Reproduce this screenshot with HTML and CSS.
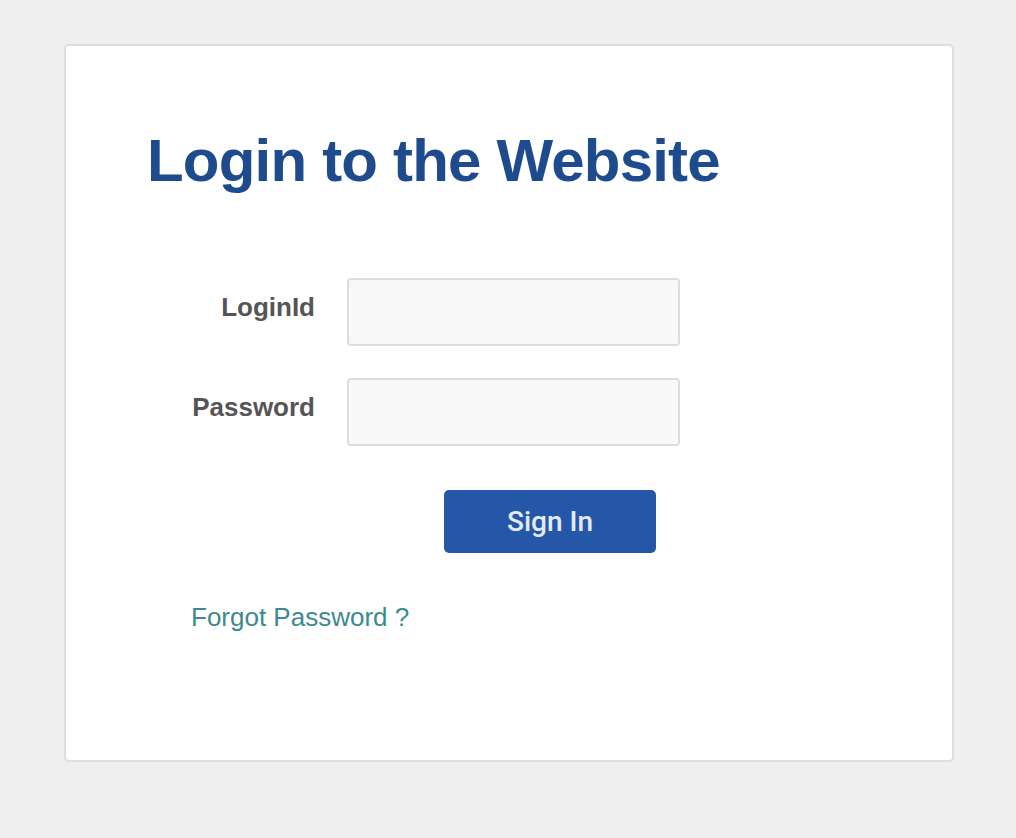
FILE: index.html
```html
<!DOCTYPE html>
<html lang="en">
<head>
<meta charset="utf-8">
<title>Login to the Website</title>
<link rel="stylesheet" href="styles.css">
</head>
<body>
  <div class="card">
    <h1 class="title">Login to the Website</h1>
    <form class="login-form">
      <label class="field-label" for="loginid">LoginId</label>
      <input class="field-input" id="loginid" type="text">
      <label class="field-label" for="password">Password</label>
      <input class="field-input" id="password" type="password">
      <div class="actions">
        <button type="button" class="btn-signin">Sign In</button>
      </div>
    </form>
    <a class="forgot" href="#">Forgot Password ?</a>
  </div>
</body>
</html>
```
FILE: styles.css
```css
html, body {
  margin: 0;
  padding: 0;
}
body {
  background: #efefef;
  font-family: "Liberation Sans", Arial, Helvetica, sans-serif;
  padding: 44px 0 0 64px;
  min-height: 838px;
  box-sizing: border-box;
}
.card {
  box-sizing: border-box;
  width: 890px;
  height: 718px;
  background: #ffffff;
  border: 2px solid #dedede;
  border-radius: 5px;
  padding: 85px 0 0 78px;
}
.title {
  margin: 0 0 0 3px;
  font-size: 60px;
  line-height: 60px;
  font-weight: bold;
  letter-spacing: -0.8px;
  color: #1e4b8d;
}
.login-form {
  display: grid;
  grid-template-columns: 171px 333px;
  column-gap: 32px;
  row-gap: 32px;
  margin-top: 87px;
}
.field-label {
  justify-self: end;
  align-self: start;
  padding-top: 14px;
  font-size: 26px;
  line-height: 30px;
  font-weight: bold;
  color: #555555;
}
.field-input {
  box-sizing: border-box;
  width: 333px;
  height: 68px;
  margin: 0;
  background: #f9f9f9;
  border: 2px solid #dddddd;
  border-radius: 4px;
  font-size: 22px;
  padding: 0 12px;
  outline: none;
}
.actions {
  grid-column: 2;
  margin-top: 12px;
  padding-left: 97px;
}
.btn-signin {
  display: block;
  width: 212px;
  height: 63px;
  border: none;
  border-radius: 5px;
  background: #2557a8;
  color: #e4eaf4;
  font-family: Roboto, "Liberation Sans", sans-serif;
  font-size: 28px;
  font-weight: 500;
  padding: 0;
  cursor: pointer;
}
.forgot {
  display: inline-block;
  margin-top: 49px;
  margin-left: 47px;
  font-size: 26px;
  line-height: 30px;
  color: #3c8a8e;
  text-decoration: none;
}
```
